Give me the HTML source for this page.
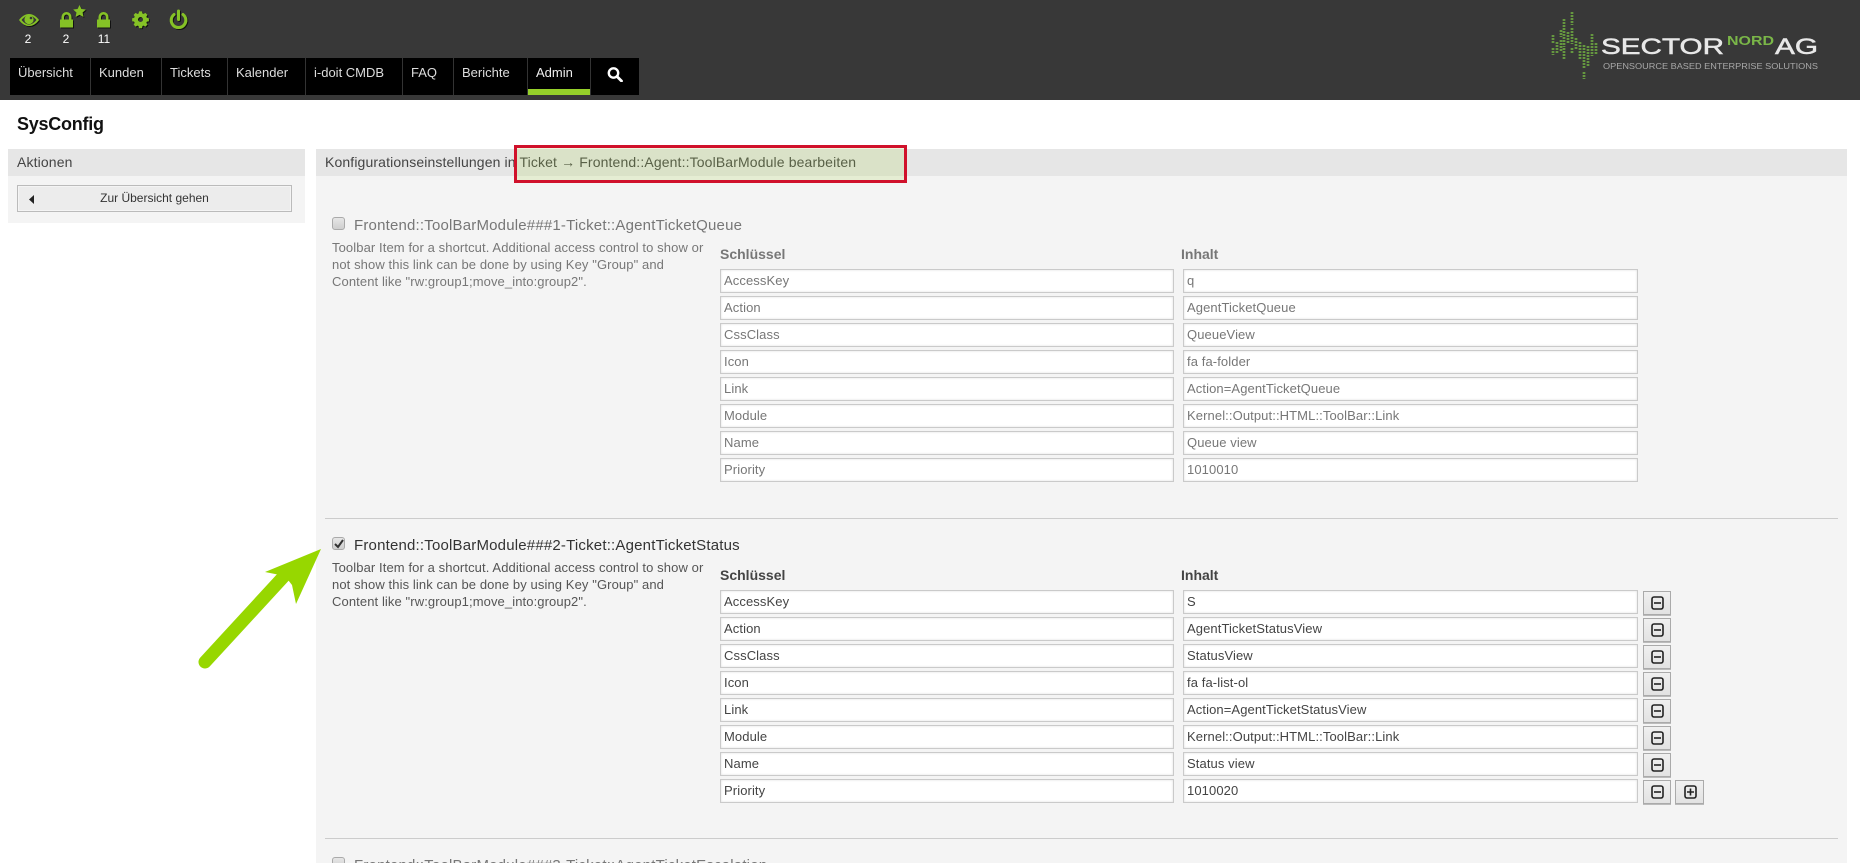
<!DOCTYPE html>
<html lang="de">
<head>
<meta charset="utf-8">
<title>SysConfig</title>
<style>
html,body{margin:0;padding:0;background:#fff;font-family:"Liberation Sans",Arial,sans-serif;color:#333}
#page{position:relative;width:1860px;height:863px;overflow:hidden;background:#fff}
*{box-sizing:border-box}
.a{position:absolute;white-space:nowrap}
#hd{position:absolute;left:0;top:0;width:1860px;height:100px;background:#383838}
#nav{position:absolute;left:10px;top:58px;width:629px;height:37px;background:#000}
#nav a{position:absolute;top:0;height:37px;line-height:30px;font-size:13px;color:#ddd;padding-left:8px;border-right:1px solid #333;text-decoration:none}
#nav a.on{color:#eee}
#nav a.on:after{content:"";position:absolute;left:0;right:0;bottom:0;height:6px;background:#95d02a}
.cnt{font-size:12px;color:#fff;width:30px;text-align:center;top:32px}
.hdr{background:#e6e6e6;top:149px;height:27px;line-height:27px;font-size:14px;color:#444;padding-left:9px;letter-spacing:.13px}
input.t{position:absolute;height:24px;border:1px solid #cacaca;box-shadow:inset 0 0 2px #ddd;background:#fff;font:13px "Liberation Sans",Arial,sans-serif;letter-spacing:.1px;padding:0 3px 1px;margin:0;border-radius:0;outline:0}
input.k{left:720px;width:454px}
input.v{left:1183px;width:455px}
.s1 input.t{color:#777}
.s2 input.t{color:#444}
.b{position:absolute;left:1643px;width:28px;height:24px;border:1px solid #aaa;background:linear-gradient(#f0f0f0,#e2e2e2);box-shadow:0 1px 0 #bbb}
.b svg{position:absolute;left:7px;top:4px}
.cb{position:absolute;left:332px;width:13px;height:13px;margin:0;-webkit-appearance:none;appearance:none;border:1px solid #aaa;border-radius:3px;background:linear-gradient(#e6e6e6,#cfcfcf)}
.lab{font-size:15px;left:354px;letter-spacing:.19px}
.desc{left:332px;font-size:13px;line-height:17px;letter-spacing:.1px}
.th{font-size:14px;font-weight:bold}
.sep{position:absolute;left:325px;width:1513px;height:1px;background:#ccc}
</style>
</head>
<body>
<div id="page">
<div id="hd"></div>

<!-- toolbar icons -->
<svg class="a" style="left:0;top:0" width="200" height="32" viewBox="0 0 200 32">
 <defs><filter id="ds" x="-20%" y="-20%" width="140%" height="140%"><feDropShadow dx="1" dy="1" stdDeviation="0.3" flood-color="#111" flood-opacity="0.9"/></filter></defs>
 <g filter="url(#ds)">
  <path d="M19 20c3-4 6.500-6 10-6s7 2 10 6c-3 4-6.500 6-10 6s-7-2-10-6z" fill="#85c226"/>
  <path d="M21.500 20c2.500-3 5-4.600 7.500-4.600s5 1.600 7.500 4.600c-2.500 3-5 4.600-7.500 4.600s-5-1.600-7.500-4.600z" fill="#383838"/>
  <circle cx="29" cy="19.500" r="4.600" fill="#85c226"/>
  <circle cx="31" cy="18" r="1.300" fill="#383838"/>
 </g>
 <g fill="#85c226" filter="url(#ds)">
  <path fill-rule="evenodd" d="M60 19.500h1.500v-2.500a5 5 0 0 1 10 0v2.500h1.500v8h-13zm4 0h5v-2.500a2.500 2.500 0 0 0-5 0z"/>
  <path d="M79.500 5l1.900 4 4.400.5-3.300 3 .9 4.400-3.900-2.200-3.900 2.200.9-4.400-3.300-3 4.400-.5z"/>
  <path fill-rule="evenodd" d="M97 19.500h1.500v-2.500a5 5 0 0 1 10 0v2.500h1.500v8h-13zm4 0h5v-2.500a2.500 2.500 0 0 0-5 0z"/>
  <path fill-rule="evenodd" d="M138.800 11h3.400l.5 2.400 1.500.6 2-1.300 2.400 2.400-1.300 2 .6 1.500 2.400.5v3.400l-2.400.5-.6 1.500 1.300 2-2.400 2.400-2-1.300-1.500.6-.5 2.400h-3.400l-.5-2.400-1.500-.6-2 1.300-2.400-2.400 1.300-2-.6-1.500-2.400-.5v-3.400l2.400-.5.6-1.500-1.300-2 2.400-2.400 2 1.300 1.500-.6zm1.700 6.500a3 3 0 1 0 0 6 3 3 0 0 0 0-6z" transform="translate(140.500,19.500) scale(.85) translate(-140.500,-20.500)"/>
 </g>
 <g fill="none" stroke="#85c226" stroke-width="3" stroke-linecap="round" filter="url(#ds)">
  <path d="M174 14.500a7.300 7.300 0 1 0 9 0"/>
  <path d="M178.500 11v8.500"/>
 </g>
</svg>
<div class="a cnt" style="left:13px">2</div>
<div class="a cnt" style="left:51px">2</div>
<div class="a cnt" style="left:89px">11</div>

<!-- nav -->
<div id="nav">
 <a style="left:0;width:81px">Übersicht</a>
 <a style="left:81px;width:71px">Kunden</a>
 <a style="left:152px;width:66px">Tickets</a>
 <a style="left:218px;width:78px">Kalender</a>
 <a style="left:296px;width:97px">i-doit CMDB</a>
 <a style="left:393px;width:51px">FAQ</a>
 <a style="left:444px;width:74px">Berichte</a>
 <a class="on" style="left:518px;width:63px">Admin</a>
 <svg class="a" style="left:596px;top:9px" width="17" height="15" viewBox="0 0 17 15" fill="none" stroke="#fff" stroke-width="2.400"><circle cx="7.500" cy="6" r="4.700"/><path d="M11 9.500l4.500 4.500" stroke-linecap="round" stroke-width="2.800"/></svg>
</div>

<!-- logo -->
<svg class="a" style="left:1540px;top:5px" width="300" height="80" viewBox="0 0 300 80">
 <g fill="none" stroke="#659740" stroke-width="2.700" stroke-dasharray="2 1">
  <path d="M13 30v8M13 43v7M17 37v11M21 25v7M21 35v12M24 14v28M24 43v12M28 27v12M32 7v13M32 23v16M32 43v5M36 33v12M40 37v18M44 40v24M44 67v7M48 41v21M52 29v22M56 38v11"/>
 </g>
 <g font-family="'Liberation Sans',sans-serif">
  <text x="61" y="49" font-size="22" fill="#e8e8e8" stroke="#e8e8e8" stroke-width=".5" textLength="123" lengthAdjust="spacingAndGlyphs">SECTOR</text>
  <text x="187" y="40" font-size="12.500" font-weight="bold" fill="#7ab648" textLength="47" lengthAdjust="spacingAndGlyphs">NORD</text>
  <text x="235" y="49" font-size="22" fill="#e8e8e8" stroke="#e8e8e8" stroke-width=".5" textLength="43" lengthAdjust="spacingAndGlyphs">AG</text>
  <text x="63" y="64" font-size="8" fill="#a8a8a8" textLength="215" lengthAdjust="spacingAndGlyphs">OPENSOURCE BASED ENTERPRISE SOLUTIONS</text>
 </g>
</svg>

<div class="a" style="left:17px;top:113px;font-size:18px;font-weight:bold;line-height:22px;color:#111;letter-spacing:-.25px">SysConfig</div>

<!-- sidebar -->
<div class="a hdr" style="left:8px;width:297px">Aktionen</div>
<div class="a" style="left:8px;top:176px;width:297px;height:47px;background:#f4f4f4"></div>
<div class="a" style="left:17px;top:185px;width:275px;height:27px;border:1px solid #bbb;box-shadow:inset 0 0 0 1px #f4f4f4;background:#ececec;text-align:center;font-size:12px;line-height:24px;color:#333">Zur Übersicht gehen</div>
<svg class="a" style="left:29px;top:195px" width="6" height="9"><path d="M5 0v9L0 4.500z" fill="#222"/></svg>

<!-- main -->
<div class="a hdr" style="left:316px;width:1531px">Konfigurationseinstellungen in Ticket → Frontend::Agent::ToolBarModule bearbeiten</div>
<div class="a" style="left:316px;top:176px;width:1531px;height:687px;background:#f4f4f4"></div>

<!-- section 1 -->
<div class="s1">
 <input type="checkbox" class="cb" style="top:217px" disabled>
 <div class="a lab" style="top:217px;color:#777">Frontend::ToolBarModule###1-Ticket::AgentTicketQueue</div>
 <div class="a desc" style="top:239px;color:#777">Toolbar Item for a shortcut. Additional access control to show or<br>not show this link can be done by using Key "Group" and<br>Content like "rw:group1;move_into:group2".</div>
 <div class="a th" style="left:720px;top:246px;color:#777">Schlüssel</div>
 <div class="a th" style="left:1181px;top:246px;color:#777">Inhalt</div>
 <input class="t k" style="top:269px" value="AccessKey" readonly><input class="t v" style="top:269px" value="q" readonly>
 <input class="t k" style="top:296px" value="Action" readonly><input class="t v" style="top:296px" value="AgentTicketQueue" readonly>
 <input class="t k" style="top:323px" value="CssClass" readonly><input class="t v" style="top:323px" value="QueueView" readonly>
 <input class="t k" style="top:350px" value="Icon" readonly><input class="t v" style="top:350px" value="fa fa-folder" readonly>
 <input class="t k" style="top:377px" value="Link" readonly><input class="t v" style="top:377px" value="Action=AgentTicketQueue" readonly>
 <input class="t k" style="top:404px" value="Module" readonly><input class="t v" style="top:404px" value="Kernel::Output::HTML::ToolBar::Link" readonly>
 <input class="t k" style="top:431px" value="Name" readonly><input class="t v" style="top:431px" value="Queue view" readonly>
 <input class="t k" style="top:458px" value="Priority" readonly><input class="t v" style="top:458px" value="1010010" readonly>
</div>
<div class="sep" style="top:518px"></div>

<!-- section 2 -->
<div class="s2">
 <input type="checkbox" class="cb" style="top:537px" checked>
 <svg class="a" style="left:334px;top:539px" width="10" height="10"><path d="M1 5l3 3 5-7" fill="none" stroke="#333" stroke-width="2"/></svg>
 <div class="a lab" style="top:537px;color:#333">Frontend::ToolBarModule###2-Ticket::AgentTicketStatus</div>
 <div class="a desc" style="top:559px;color:#555">Toolbar Item for a shortcut. Additional access control to show or<br>not show this link can be done by using Key "Group" and<br>Content like "rw:group1;move_into:group2".</div>
 <div class="a th" style="left:720px;top:567px;color:#444">Schlüssel</div>
 <div class="a th" style="left:1181px;top:567px;color:#444">Inhalt</div>
 <input class="t k" style="top:590px" value="AccessKey" readonly><input class="t v" style="top:590px" value="S" readonly>
 <input class="t k" style="top:617px" value="Action" readonly><input class="t v" style="top:617px" value="AgentTicketStatusView" readonly>
 <input class="t k" style="top:644px" value="CssClass" readonly><input class="t v" style="top:644px" value="StatusView" readonly>
 <input class="t k" style="top:671px" value="Icon" readonly><input class="t v" style="top:671px" value="fa fa-list-ol" readonly>
 <input class="t k" style="top:698px" value="Link" readonly><input class="t v" style="top:698px" value="Action=AgentTicketStatusView" readonly>
 <input class="t k" style="top:725px" value="Module" readonly><input class="t v" style="top:725px" value="Kernel::Output::HTML::ToolBar::Link" readonly>
 <input class="t k" style="top:752px" value="Name" readonly><input class="t v" style="top:752px" value="Status view" readonly>
 <input class="t k" style="top:779px" value="Priority" readonly><input class="t v" style="top:779px" value="1010020" readonly>
 <div class="b" style="top:591px"><svg width="13" height="14" fill="none" stroke="#222" stroke-width="1.600"><rect x="1" y="1" width="11" height="12" rx="2"/><path d="M3 7h7"/></svg></div>
 <div class="b" style="top:618px"><svg width="13" height="14" fill="none" stroke="#222" stroke-width="1.600"><rect x="1" y="1" width="11" height="12" rx="2"/><path d="M3 7h7"/></svg></div>
 <div class="b" style="top:645px"><svg width="13" height="14" fill="none" stroke="#222" stroke-width="1.600"><rect x="1" y="1" width="11" height="12" rx="2"/><path d="M3 7h7"/></svg></div>
 <div class="b" style="top:672px"><svg width="13" height="14" fill="none" stroke="#222" stroke-width="1.600"><rect x="1" y="1" width="11" height="12" rx="2"/><path d="M3 7h7"/></svg></div>
 <div class="b" style="top:699px"><svg width="13" height="14" fill="none" stroke="#222" stroke-width="1.600"><rect x="1" y="1" width="11" height="12" rx="2"/><path d="M3 7h7"/></svg></div>
 <div class="b" style="top:726px"><svg width="13" height="14" fill="none" stroke="#222" stroke-width="1.600"><rect x="1" y="1" width="11" height="12" rx="2"/><path d="M3 7h7"/></svg></div>
 <div class="b" style="top:753px"><svg width="13" height="14" fill="none" stroke="#222" stroke-width="1.600"><rect x="1" y="1" width="11" height="12" rx="2"/><path d="M3 7h7"/></svg></div>
 <div class="b" style="top:780px"><svg width="13" height="14" fill="none" stroke="#222" stroke-width="1.600"><rect x="1" y="1" width="11" height="12" rx="2"/><path d="M3 7h7"/></svg></div>
 <div class="b" style="top:780px;left:1675px;width:29px"><svg width="13" height="14" fill="none" stroke="#222" stroke-width="1.600" style="left:8px"><rect x="1" y="1" width="11" height="12" rx="2"/><path d="M3 7h7M6.500 3.500v7"/></svg></div>
</div>
<div class="sep" style="top:838px"></div>

<!-- section 3 (clipped) -->
<input type="checkbox" class="cb" style="top:857px" disabled>
<div class="a lab" style="top:857px;color:#777">Frontend::ToolBarModule###3-Ticket::AgentTicketEscalation</div>

<!-- red annotation box -->
<div class="a" style="left:514px;top:145px;width:393px;height:38px;border:3px solid #d0112b;background:rgba(170,210,80,.2)"></div>

<!-- green arrow -->
<svg class="a" style="left:190px;top:540px" width="140" height="130" viewBox="190 540 140 130">
 <path d="M205 662L286 574" fill="none" stroke="#97d700" stroke-width="13" stroke-linecap="round"/>
 <path d="M321 549L265 572 285 576 292 585 296 604z" fill="#97d700"/>
</svg>
</div>
</body>
</html>
